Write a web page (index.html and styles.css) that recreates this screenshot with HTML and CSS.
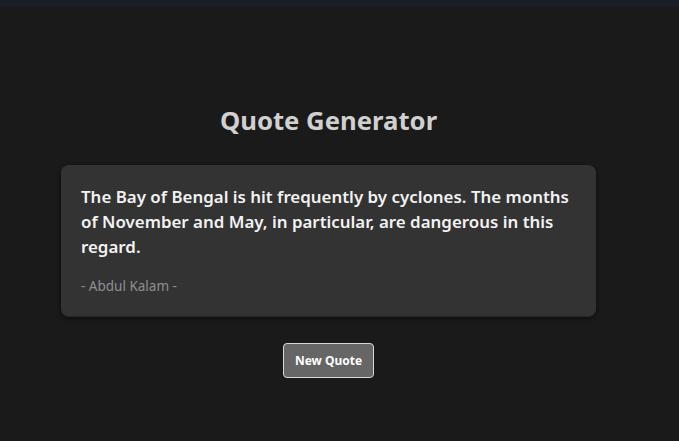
FILE: index.html
```html
<!DOCTYPE html>
<html>
<head>
<meta charset="utf-8">
<link rel="stylesheet" href="styles.css">
</head>
<body>
<div class="topbar"></div>
<main class="app">
  <h1 class="title">Quote Generator</h1>
  <div class="card">
    <p class="quote">The Bay of Bengal is hit frequently by cyclones. The months of November and May, in particular, are dangerous in this regard.</p>
    <p class="author">- Abdul Kalam -</p>
  </div>
  <button class="btn">New Quote</button>
</main>
</body>
</html>
```

FILE: styles.css
```css
html, body {
  margin: 0;
  padding: 0;
  background: #1a1a1a;
  height: 100%;
}
body {
  font-family: "Noto Sans", "Open Sans", sans-serif;
  overflow: hidden;
}
.topbar {
  height: 7px;
  background: #1b1f25;
}
.app {
  width: 657px;
  display: flex;
  flex-direction: column;
  align-items: center;
  padding-top: 97px;
}
.title {
  margin: 0;
  font-size: 25.7px;
  font-weight: 700;
  color: #d0d0d0;
  line-height: 34px;
}
.card {
  margin-top: 27px;
  width: 535px;
  box-sizing: border-box;
  background: #333333;
  border-radius: 8px;
  padding: 19px 20px 21px 20px;
  box-shadow: 0 2px 5px rgba(0,0,0,0.6), 0 1px 0 #444;
}
.quote {
  margin: 0;
  font-size: 16.9px;
  font-weight: 600;
  line-height: 25px;
  color: #f2f2f2;
}
.author {
  margin: 18px 0 0 0;
  font-size: 13.5px;
  color: #8f8f8f;
  line-height: 18px;
}
.btn {
  margin-top: 27px;
  width: 91px;
  height: 35px;
  background: #666666;
  color: #ffffff;
  border: 1px solid #d8d8d8;
  border-radius: 4px;
  font-family: "Noto Sans", sans-serif;
  font-weight: 700;
  font-size: 12px;
  padding: 0;
}
```
